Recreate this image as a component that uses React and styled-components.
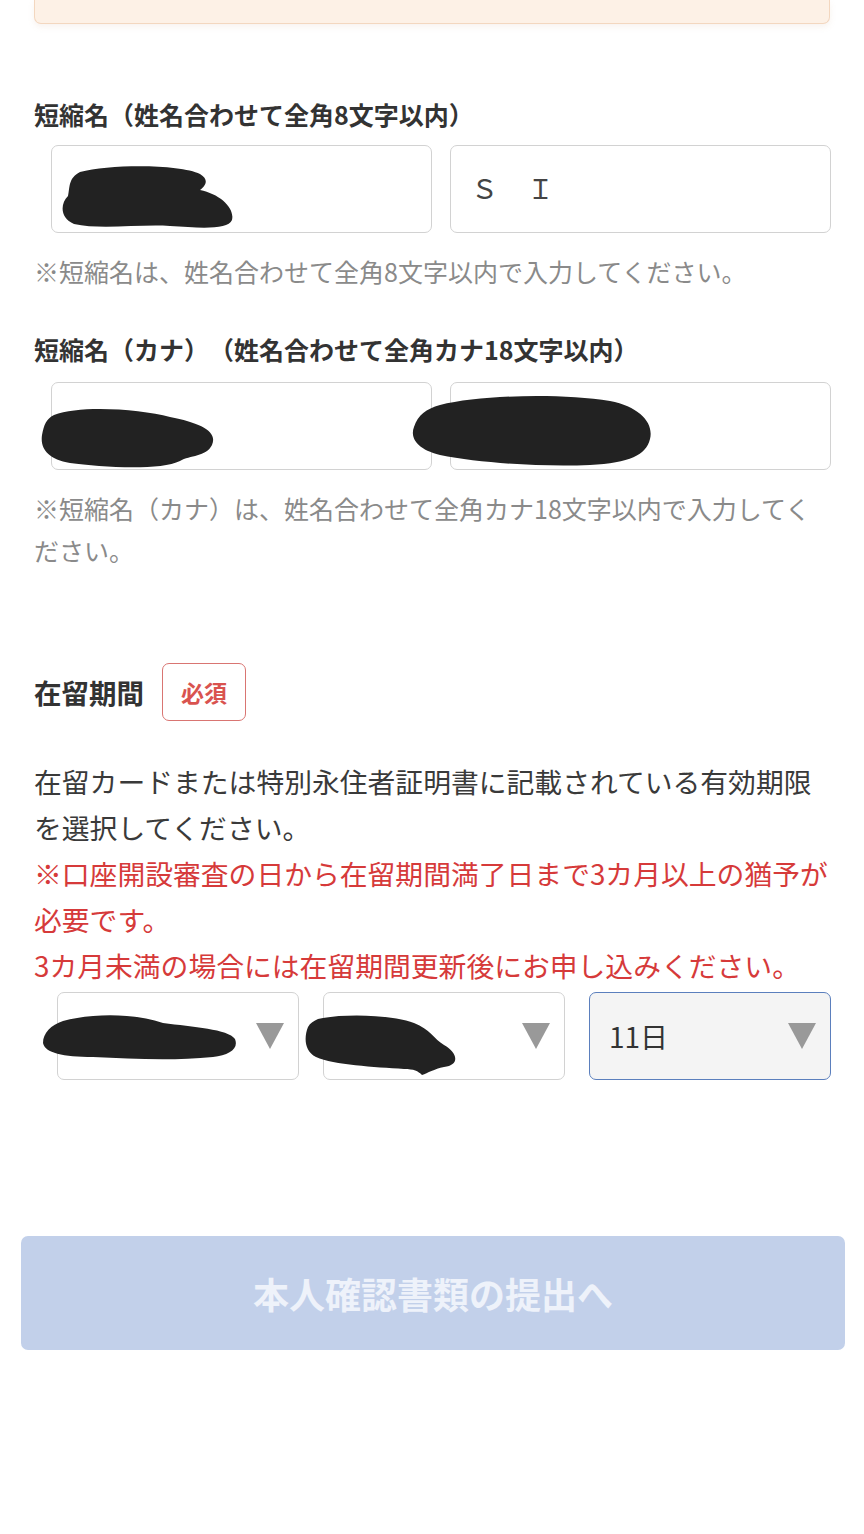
import React from "react";
import styled, { createGlobalStyle } from "styled-components";

const GlobalStyle = createGlobalStyle`
  html, body {
    margin: 0;
    padding: 0;
    background: #ffffff;
  }
  body {
    font-family: "Noto Sans CJK JP", "Noto Sans", sans-serif;
    color: #333333;
    text-spacing-trim: space-all;
  }
`;

const Page = styled.div`
  width: 864px;
  min-height: 1534px;
  background: #ffffff;
  display: flex;
  flex-direction: column;
`;

const Content = styled.div`
  padding: 0 30px 0 34px;
  display: flex;
  flex-direction: column;
`;

const NoticeCard = styled.div`
  height: 23px;
  margin-right: 4px;
  background: #fdf1e6;
  border: 1px solid #f3d7bf;
  border-top: none;
  border-radius: 0 0 7px 7px;
  box-shadow: 0 3px 6px rgba(200, 160, 120, 0.12);
`;

const FieldLabel = styled.div`
  font-size: 25px;
  font-weight: 700;
  line-height: 36px;
  color: #333333;
  margin-top: ${(p) => p.$top}px;
`;

const InputRow = styled.div`
  display: flex;
  gap: 18px;
  margin: ${(p) => p.$top || 13}px 3px 0 17px;
`;

const InputBox = styled.div`
  position: relative;
  flex: 1;
  height: 88px;
  box-sizing: border-box;
  border: 1.5px solid #d2d2d2;
  border-radius: 7px;
  background: #ffffff;
  display: flex;
  align-items: center;
  padding-left: 20px;
  padding-bottom: 4px;
  font-size: 27px;
  color: #444444;
  letter-spacing: 1px;
`;

const Hint = styled.div`
  font-size: 25px;
  line-height: 42px;
  color: #8a8a8a;
  margin-top: 17px;
`;

const Blot = styled.svg`
  position: absolute;
  pointer-events: none;
`;

const SectionHead = styled.div`
  display: flex;
  align-items: center;
  gap: 18px;
  margin-top: ${(p) => p.$top}px;
`;

const SectionTitle = styled.div`
  font-size: 27.5px;
  font-weight: 700;
  color: #333333;
`;

const Badge = styled.div`
  height: 58px;
  width: 84px;
  box-sizing: border-box;
  border: 1.5px solid #d97572;
  border-radius: 7px;
  display: flex;
  align-items: center;
  justify-content: center;
  color: #d9534f;
  font-size: 23px;
  font-weight: 700;
`;

const Paragraph = styled.div`
  font-size: 27.8px;
  line-height: 46px;
  color: ${(p) => (p.$warn ? "#d63a3a" : "#3a3a3a")};
  margin-top: ${(p) => p.$top || 0}px;
`;

const SelectRow = styled.div`
  display: flex;
  gap: 24px;
  margin: 4px 3px 0 23px;
`;

const SelectBox = styled.div`
  position: relative;
  flex: 1;
  height: 88px;
  box-sizing: border-box;
  border: 1.5px solid ${(p) => (p.$focused ? "#5b7fbd" : "#d2d2d2")};
  background: ${(p) => (p.$focused ? "#f4f4f4" : "#ffffff")};
  border-radius: 7px;
  display: flex;
  align-items: center;
  justify-content: space-between;
  padding: 0 14px 0 19px;
  font-size: 28px;
  color: #333333;
`;

const Arrow = styled.span`
  width: 0;
  height: 0;
  border-left: 14px solid transparent;
  border-right: 14px solid transparent;
  border-top: 26px solid #999999;
`;

const SubmitWrap = styled.div`
  padding: 0 19px 0 21px;
  margin-top: 156px;
`;

const SubmitButton = styled.div`
  height: 114px;
  background: #c2d0ea;
  border-radius: 7px;
  display: flex;
  align-items: center;
  justify-content: center;
  color: #eef2fa;
  font-size: 36px;
  font-weight: 700;
`;

function Redaction({ left, top, width, height, d }) {
  return (
    <Blot
      style={{ left, top, width, height }}
      viewBox={`0 0 ${width} ${height}`}
    >
      <path d={d} fill="#222222" />
    </Blot>
  );
}

export default function App() {
  return (
    <Page>
      <GlobalStyle />
      <Content>
        <NoticeCard />

        <FieldLabel $top={72}>短縮名（姓名合わせて全角8文字以内）</FieldLabel>
        <InputRow>
          <InputBox>
            <Redaction
              left={8}
              top={18}
              width={174}
              height={66}
              d="M20 8 C50 0 120 0 140 10 C150 16 145 22 140 26 C160 30 175 44 172 56 C168 66 140 64 110 62 C80 60 40 66 14 60 C0 54 0 40 8 32 C10 24 8 14 20 8 Z"
            />
          </InputBox>
          <InputBox>Ｓ　Ｉ</InputBox>
        </InputRow>
        <Hint>※短縮名は、姓名合わせて全角8文字以内で入力してください。</Hint>

        <FieldLabel $top={39}>短縮名（カナ）（姓名合わせて全角カナ18文字以内）</FieldLabel>
        <InputRow $top={15}>
          <InputBox>
            <Redaction
              left={-12}
              top={22}
              width={176}
              height={64}
              d="M14 10 C40 0 100 4 130 12 C160 18 178 26 172 40 C166 52 150 50 140 56 C120 66 60 62 30 58 C8 54 0 44 2 30 C4 20 6 14 14 10 Z"
            />
          </InputBox>
          <InputBox>
            <Redaction
              left={-41}
              top={10}
              width={244}
              height={74}
              d="M30 12 C70 2 150 0 200 8 C230 14 244 30 240 46 C236 62 220 70 180 72 C130 74 70 70 30 62 C6 56 0 44 4 34 C8 22 16 16 30 12 Z"
            />
          </InputBox>
        </InputRow>
        <Hint>
          ※短縮名（カナ）は、姓名合わせて全角カナ18文字以内で入力してください。
        </Hint>

        <SectionHead $top={92}>
          <SectionTitle>在留期間</SectionTitle>
          <Badge>必須</Badge>
        </SectionHead>

        <Paragraph $top={37}>
          在留カードまたは特別永住者証明書に記載されている有効期限を選択してください。
        </Paragraph>
        <Paragraph $warn>
          ※口座開設審査の日から在留期間満了日まで3カ月以上の猶予が必要です。
        </Paragraph>
        <Paragraph $warn>3カ月未満の場合には在留期間更新後にお申し込みください。</Paragraph>

        <SelectRow>
          <SelectBox>
            <Redaction
              left={-15}
              top={20}
              width={195}
              height={48}
              d="M20 8 C50 0 90 0 120 10 C150 14 185 16 192 26 C196 36 186 42 170 44 C130 48 90 46 50 44 C20 44 2 40 0 30 C0 20 8 12 20 8 Z"
            />
            <span />
            <Arrow />
          </SelectBox>
          <SelectBox>
            <Redaction
              left={-20}
              top={20}
              width={156}
              height={62}
              d="M14 6 C40 0 90 2 110 10 C126 16 130 26 140 32 C154 40 156 52 140 54 C130 56 124 60 118 62 C114 58 110 56 100 56 C70 54 30 52 12 44 C0 38 0 24 4 14 C6 10 10 8 14 6 Z"
            />
            <span />
            <Arrow />
          </SelectBox>
          <SelectBox $focused>
            <span>11日</span>
            <Arrow />
          </SelectBox>
        </SelectRow>
      </Content>

      <SubmitWrap>
        <SubmitButton>本人確認書類の提出へ</SubmitButton>
      </SubmitWrap>
    </Page>
  );
}
